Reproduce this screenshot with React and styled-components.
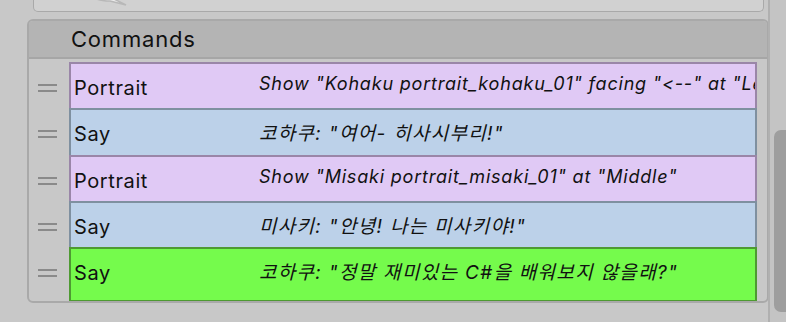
import React from "react";
import styled, { createGlobalStyle } from "styled-components";

const Global = createGlobalStyle`
  html, body { margin: 0; padding: 0; background: #c8c8c8; overflow: hidden; }
  body {
    font-family: Inter, "Noto Sans", "Noto Sans CJK KR", sans-serif;
    font-feature-settings: "liga" 0, "calt" 0;
    font-variant-ligatures: none;
  }
`;

const Page = styled.div`
  display: flex;
  width: 786px;
  height: 322px;
  overflow: hidden;
`;

const Main = styled.div`
  width: 768px;
  display: flex;
  flex-direction: column;
`;

const TopBox = styled.div`
  margin-left: 33px;
  width: 729px;
  height: 11px;
  background: #d1d1d1;
  border: 1px solid #a9a9a9;
  border-top: none;
  border-radius: 0 0 5px 5px;
  position: relative;
  overflow: hidden;
`;

const BubbleIcon = styled.svg`
  position: absolute;
  left: 52px;
  top: -22px;
`;

const Panel = styled.div`
  margin-top: 7px;
  margin-left: 27px;
  width: 738px;
  height: 280px;
  border: 2px solid #a9a9a9;
  border-radius: 6px;
  display: flex;
  flex-direction: column;
  background: #c8c8c8;
  overflow: hidden;
`;

const Header = styled.div`
  height: 36px;
  flex: none;
  background: #b4b4b4;
  border-bottom: 2px solid #a6a6a6;
  display: flex;
  align-items: center;
  padding-left: 42px;
  font-size: 22px;
  letter-spacing: 0.8px;
  color: #111;
`;

const List = styled.div`
  padding-top: 3px;
  display: flex;
  flex-direction: column;
`;

const Row = styled.div`
  display: flex;
  height: ${(p) => p.h}px;
  margin-top: ${(p) => (p.first ? 0 : -2)}px;
`;

const Handle = styled.div`
  width: 40px;
  flex: none;
  display: flex;
  justify-content: flex-start;
  padding-left: 9px;
  padding-top: 22px;
  box-sizing: border-box;
`;

const HandleLines = styled.div`
  width: 19px;
  height: 8px;
  border-top: 2px solid #8a8a8a;
  border-bottom: 2px solid #8a8a8a;
  box-sizing: border-box;
`;

const CommandBox = styled.div`
  width: 688px;
  box-sizing: border-box;
  background: ${(p) => p.bg};
  border: 2px solid ${(p) => p.bd};
  display: flex;
  overflow: hidden;
  white-space: nowrap;
  color: #111;
`;

const Label = styled.div`
  width: 185px;
  flex: none;
  padding-left: 3px;
  padding-top: 12px;
  font-size: 20px;
  letter-spacing: 0.6px;
`;

const Desc = styled.div`
  padding-top: ${(p) => (p.ko ? 8 : 9)}px;
  font-size: ${(p) => (p.ko ? 19 : 18)}px;
  letter-spacing: ${(p) => (p.ko ? 1.3 : 0.8)}px;
  font-style: italic;
  overflow: hidden;
`;

const Scrollbar = styled.div`
  width: 18px;
  flex: none;
  border-left: 2px solid #b0b0b0;
  background: #c4c4c4;
  display: flex;
  flex-direction: column;
  padding-left: 4px;
  box-sizing: border-box;
`;

const Thumb = styled.div`
  margin-top: 130px;
  height: 182px;
  background: #9e9e9e;
  border-radius: 7px 0 0 7px;
`;

const colors = {
  portrait: { bg: "#e0c9f5", bd: "#9a86a8" },
  say: { bg: "#bcd1e9", bd: "#7f90a0" },
  sel: { bg: "#75fb4c", bd: "#4e9a32" },
};

const rows = [
  { label: "Portrait", desc: 'Show "Kohaku portrait_kohaku_01" facing "<--" at "Left"', type: "portrait", h: 48 },
  { label: "Say", desc: '코하쿠: "여어- 히사시부리!"', type: "say", h: 49, ko: true },
  { label: "Portrait", desc: 'Show "Misaki portrait_misaki_01" at "Middle"', type: "portrait", h: 48 },
  { label: "Say", desc: '미사키: "안녕! 나는 미사키야!"', type: "say", h: 48, ko: true },
  { label: "Say", desc: '코하쿠: "정말 재미있는 C#을 배워보지 않을래?"', type: "sel", h: 55, ko: true },
];

export default function App() {
  return (
    <Page>
      <Global />
      <Main>
        <TopBox>
          <BubbleIcon width="50" height="30" viewBox="0 0 50 30">
            <path
              d="M4 12 Q4 2 22 2 Q40 2 40 12 Q40 20 30 22 L40 27 L24 23 Q4 23 4 12 Z"
              fill="#ececec"
              stroke="#b8b8b8"
              strokeWidth="1.5"
            />
          </BubbleIcon>
        </TopBox>
        <Panel>
          <Header>Commands</Header>
          <List>
            {rows.map((r, i) => (
              <Row key={i} h={r.h} first={i === 0}>
                <Handle>
                  <HandleLines />
                </Handle>
                <CommandBox bg={colors[r.type].bg} bd={colors[r.type].bd}>
                  <Label>{r.label}</Label>
                  <Desc ko={r.ko}>{r.desc}</Desc>
                </CommandBox>
              </Row>
            ))}
          </List>
        </Panel>
      </Main>
      <Scrollbar>
        <Thumb />
      </Scrollbar>
    </Page>
  );
}
